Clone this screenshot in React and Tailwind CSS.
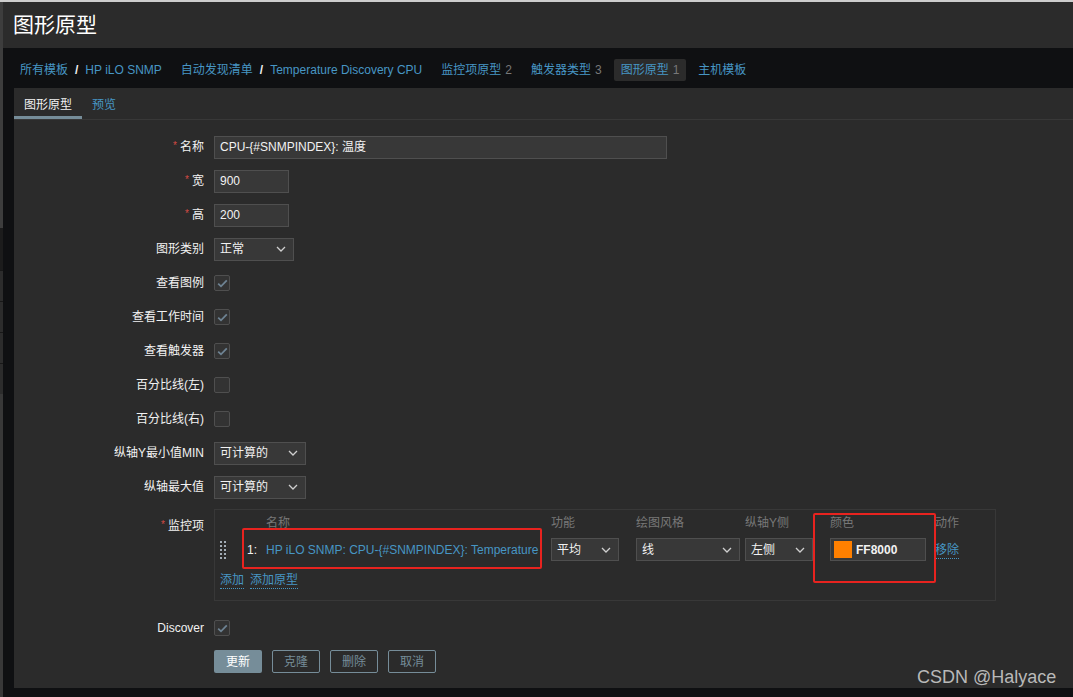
import React from "react";

const FONT = { fontFamily: '"Liberation Sans", Arial, "Noto Sans CJK SC", sans-serif' };

function Chevron() {
  return (
    <svg width="10" height="6" viewBox="0 0 10 6" className="shrink-0">
      <path d="M1 1 L5 5 L9 1" fill="none" stroke="#cfcfcf" strokeWidth="1.3" />
    </svg>
  );
}

function Select({ value, w }) {
  return (
    <div
      className={`flex h-[23px] items-center justify-between border border-[#4f4f4f] bg-[#383838] pl-[5px] pr-[7px] text-[12px] text-[#f2f2f2] ${w}`}
    >
      <span>{value}</span>
      <Chevron />
    </div>
  );
}

function Checkbox({ checked }) {
  return (
    <div className="flex h-[16px] w-[16px] items-center justify-center rounded-[2px] border border-[#4f4f4f] bg-[#333333]">
      {checked && (
        <svg width="11" height="9" viewBox="0 0 11 9">
          <path d="M1.2 4.6 L4 7.3 L9.8 1.4" fill="none" stroke="#6e8393" strokeWidth="1.8" />
        </svg>
      )}
    </div>
  );
}

function Row({ label, req, children }) {
  return (
    <div className="flex h-[34px] items-center">
      <div className="w-[190px] pr-0 text-right text-[12px] text-[#f2f2f2]">
        {req && <span className="relative top-[-2px] mr-[3px] text-[10px] text-[#d44a44]">*</span>}
        {label}
      </div>
      <div className="ml-[10px] flex items-center">{children}</div>
    </div>
  );
}

function Input({ value, w }) {
  return (
    <div className={`flex h-[23px] items-center border border-[#4f4f4f] bg-[#383838] px-[5px] text-[12px] text-[#f2f2f2] ${w}`}>
      {value}
    </div>
  );
}

function Crumb({ children, active }) {
  return (
    <div
      className={`flex h-[22px] items-center px-[7px] ${active ? "rounded-[2px] bg-[#2b2b2b]" : ""}`}
    >
      {children}
    </div>
  );
}

function Handle() {
  const dots = [];
  for (let r = 0; r < 5; r++) {
    for (let c = 0; c < 2; c++) {
      dots.push(<rect key={`${r}-${c}`} x={c * 4} y={r * 4} width="2" height="2" fill="#a3adb6" />);
    }
  }
  return (
    <svg width="6" height="18" viewBox="0 0 6 18">
      {dots}
    </svg>
  );
}

export default function App() {
  return (
    <div className="relative h-[697px] w-[1073px] overflow-hidden bg-[#0f1012]" style={FONT}>
      <div className="h-[2px] bg-[#cdcdcd]" />
      <div className="flex h-[695px]">
        {/* left strip */}
        <div className="flex w-[3px] flex-col">
          <div className="h-[226px] bg-[#3d3d3d]" />
          <div className="h-[42px] bg-[#1c1c1c]" />
          <div className="h-[31px] border-t border-[#181818] bg-[#2c2c2c]" />
          <div className="h-[31px] border-t border-[#181818] bg-[#2c2c2c]" />
          <div className="h-[31px] border-t border-[#181818] bg-[#2c2c2c]" />
          <div className="h-[31px] border-t border-[#181818] bg-[#2c2c2c]" />
          <div className="flex-1 bg-[#383838]" />
        </div>
        <div className="flex flex-1 flex-col">
          {/* header */}
          <div className="flex h-[46px] items-center bg-[#2b2b2b] pl-[10px] text-[21px] text-white">
            图形原型
          </div>
          {/* breadcrumbs */}
          <div className="flex h-[40px] items-center gap-[5px] pl-[10px] pt-[3px] text-[12px] text-[#4796c4]">
            <Crumb>
              所有模板<span className="mx-[7px] font-bold text-[#f2f2f2]">/</span>HP iLO SNMP
            </Crumb>
            <Crumb>
              自动发现清单<span className="mx-[7px] font-bold text-[#f2f2f2]">/</span>Temperature Discovery CPU
            </Crumb>
            <Crumb>
              监控项原型<span className="ml-[4px] text-[#787878]">2</span>
            </Crumb>
            <Crumb>
              触发器类型<span className="ml-[4px] text-[#787878]">3</span>
            </Crumb>
            <Crumb active>
              图形原型<span className="ml-[4px] text-[#787878]">1</span>
            </Crumb>
            <Crumb>主机模板</Crumb>
          </div>
          {/* panel */}
          <div className="ml-[11px] flex h-[600px] flex-col bg-[#2b2b2b]">
            <div className="flex h-[32px] border-b border-[#383838] text-[12px]">
              <div className="flex items-center border-b-[3px] border-[#768d99] px-[10px] pt-[5px] text-[#f2f2f2]">
                图形原型
              </div>
              <div className="flex items-center px-[10px] pt-[2px] text-[#4796c4]">预览</div>
            </div>
            <div className="flex flex-col pt-[10px]">
              <Row label="名称" req>
                <Input value="CPU-{#SNMPINDEX}: 温度" w="w-[453px]" />
              </Row>
              <Row label="宽" req>
                <Input value="900" w="w-[75px]" />
              </Row>
              <Row label="高" req>
                <Input value="200" w="w-[75px]" />
              </Row>
              <Row label="图形类别">
                <Select value="正常" w="w-[80px]" />
              </Row>
              <Row label="查看图例">
                <Checkbox checked />
              </Row>
              <Row label="查看工作时间">
                <Checkbox checked />
              </Row>
              <Row label="查看触发器">
                <Checkbox checked />
              </Row>
              <Row label="百分比线(左)">
                <Checkbox />
              </Row>
              <Row label="百分比线(右)">
                <Checkbox />
              </Row>
              <Row label="纵轴Y最小值MIN">
                <Select value="可计算的" w="w-[92px]" />
              </Row>
              <Row label="纵轴最大值">
                <Select value="可计算的" w="w-[92px]" />
              </Row>
              {/* items */}
              <div className="flex pt-[5px]">
                <div className="w-[190px] pt-[8px] text-right text-[12px] text-[#f2f2f2]">
                  <span className="relative top-[-2px] mr-[3px] text-[10px] text-[#d44a44]">*</span>
                  监控项
                </div>
                <div className="relative ml-[10px] h-[92px] w-[782px] border border-[#383838] pl-[5px] pt-[4px] text-[12px]">
                  <div className="flex h-[18px] items-center text-[#787878]">
                    <div className="w-[46px]" />
                    <div className="w-[285px]">名称</div>
                    <div className="w-[85px]">功能</div>
                    <div className="w-[109px]">绘图风格</div>
                    <div className="w-[85px]">纵轴Y侧</div>
                    <div className="w-[105px]">颜色</div>
                    <div>动作</div>
                  </div>
                  <div className="mt-[6px] flex h-[23px] items-center">
                    <div className="flex w-[27px] items-center">
                      <Handle />
                    </div>
                    <div className="w-[19px] text-[#f2f2f2]">1:</div>
                    <div className="w-[285px] whitespace-nowrap text-[#4796c4]">
                      HP iLO SNMP: CPU-{"{#SNMPINDEX}"}: Temperature
                    </div>
                    <div className="w-[85px]">
                      <Select value="平均" w="w-[68px]" />
                    </div>
                    <div className="w-[109px]">
                      <Select value="线" w="w-[104px]" />
                    </div>
                    <div className="w-[85px]">
                      <Select value="左侧" w="w-[68px]" />
                    </div>
                    <div className="w-[105px]">
                      <div className="flex h-[23px] w-[96px] items-center border border-[#4f4f4f] bg-[#383838] pl-[3px]">
                        <div className="h-[17px] w-[18px] bg-[#ff8000]" />
                        <span className="ml-[4px] font-bold text-[#f2f2f2]">FF8000</span>
                      </div>
                    </div>
                    <div className="mt-[3px] border-b border-dotted border-[#4796c4] leading-[15px] text-[#4796c4]">移除</div>
                  </div>
                  <div className="mt-[12px] flex items-center gap-[6px] text-[#4796c4]">
                    <span className="border-b border-dotted border-[#4796c4] leading-[15px]">添加</span>
                    <span className="border-b border-dotted border-[#4796c4] leading-[15px]">添加原型</span>
                  </div>
                  {/* annotation boxes */}
                  <div className="absolute left-[27px] top-[18px] h-[41px] w-[300px] rounded-[2px] border-2 border-[#e8231f]" />
                  <div className="absolute left-[598px] top-[3px] h-[70px] w-[123px] rounded-[2px] border-2 border-[#e8231f]" />
                </div>
              </div>
              <div className="mt-[10px]">
                <Row label="Discover">
                  <Checkbox checked />
                </Row>
              </div>
              <div className="ml-[200px] mt-[5px] flex gap-[10px] text-[12px]">
                <div className="flex h-[23px] w-[48px] items-center justify-center rounded-[2px] bg-[#768d99] text-white">
                  更新
                </div>
                <div className="flex h-[23px] w-[48px] items-center justify-center rounded-[2px] border border-[#768d99] text-[#768d99]">
                  克隆
                </div>
                <div className="flex h-[23px] w-[48px] items-center justify-center rounded-[2px] border border-[#768d99] text-[#768d99]">
                  删除
                </div>
                <div className="flex h-[23px] w-[48px] items-center justify-center rounded-[2px] border border-[#768d99] text-[#768d99]">
                  取消
                </div>
              </div>
            </div>
          </div>
        </div>
      </div>
      <div className="absolute left-[917px] top-[664px] text-[18px] text-[#b9b9b9]">CSDN @Halyace</div>
    </div>
  );
}
